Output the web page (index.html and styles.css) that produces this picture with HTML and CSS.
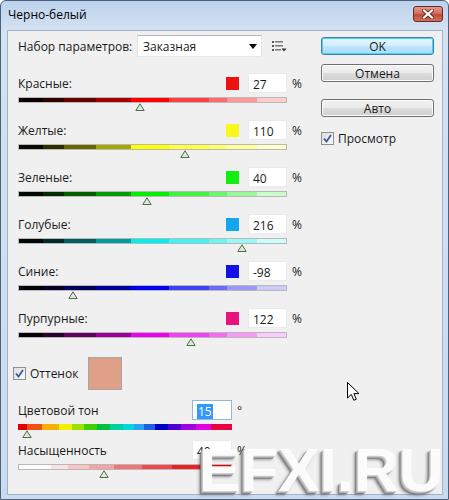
FILE: index.html
```html
<!DOCTYPE html>
<html lang="ru">
<head>
  <meta charset="UTF-8">
  <title>Черно-белый</title>
  <link rel="stylesheet" href="styles.css">
</head>
<body>

<div class="window">
  <div class="titlebar">
    <span class="title">Черно-белый</span>
    <div class="close">
      <svg width="12" height="10" viewBox="0 0 12 10">
        <path d="M2 1.5 L10 8.5 M10 1.5 L2 8.5" stroke="#6b2a22" stroke-width="4" stroke-linecap="square"/>
        <path d="M2 1.5 L10 8.5 M10 1.5 L2 8.5" stroke="#fff" stroke-width="2.2" stroke-linecap="square"/>
      </svg>
    </div>
  </div>

  <div class="content">
    <div class="main">

      <div class="preset">
        <span class="preset-label">Набор параметров:</span>
        <div class="select">
          <span>Заказная</span>
          <svg class="select-arrow" width="8" height="5" viewBox="0 0 8 5"><path d="M0 0 H8 L4 5 Z" fill="#000"/></svg>
        </div>
        <svg class="menu-icon" width="15" height="11" viewBox="0 0 15 11">
          <rect x="0" y="0" width="2" height="2" fill="#555"/>
          <rect x="3" y="0" width="8" height="1.5" fill="#777"/>
          <rect x="0" y="4" width="2" height="2" fill="#555"/>
          <rect x="3" y="4" width="8" height="1.5" fill="#777"/>
          <rect x="0" y="8" width="2" height="2" fill="#555"/>
          <rect x="3" y="8" width="6" height="1.5" fill="#777"/>
          <path d="M9.5 7.5 H14.5 L12 10.5 Z" fill="#333"/>
        </svg>
      </div>

      <div class="slider first red">
        <div class="head"><span class="name">Красные:</span><span class="swatch"></span><span class="num">27</span></div>
        <span class="unit">%</span>
        <div class="bar"></div>
        <div class="track"><svg class="thumb" style="left:45.4%" width="10" height="8" viewBox="0 0 10 8"><path d="M5 0.8 L9.2 7.5 H0.8 Z" fill="#dbe9d6" stroke="#4f6d4f"/></svg></div>
      </div>

      <div class="slider yellow">
        <div class="head"><span class="name">Желтые:</span><span class="swatch"></span><span class="num">110</span></div>
        <span class="unit">%</span>
        <div class="bar"></div>
        <div class="track"><svg class="thumb" style="left:62%" width="10" height="8" viewBox="0 0 10 8"><path d="M5 0.8 L9.2 7.5 H0.8 Z" fill="#dbe9d6" stroke="#4f6d4f"/></svg></div>
      </div>

      <div class="slider green">
        <div class="head"><span class="name">Зеленые:</span><span class="swatch"></span><span class="num">40</span></div>
        <span class="unit">%</span>
        <div class="bar"></div>
        <div class="track"><svg class="thumb" style="left:48%" width="10" height="8" viewBox="0 0 10 8"><path d="M5 0.8 L9.2 7.5 H0.8 Z" fill="#dbe9d6" stroke="#4f6d4f"/></svg></div>
      </div>

      <div class="slider cyan">
        <div class="head"><span class="name">Голубые:</span><span class="swatch"></span><span class="num">216</span></div>
        <span class="unit">%</span>
        <div class="bar"></div>
        <div class="track"><svg class="thumb" style="left:83.2%" width="10" height="8" viewBox="0 0 10 8"><path d="M5 0.8 L9.2 7.5 H0.8 Z" fill="#dbe9d6" stroke="#4f6d4f"/></svg></div>
      </div>

      <div class="slider blue">
        <div class="head"><span class="name">Синие:</span><span class="swatch"></span><span class="num">-98</span></div>
        <span class="unit">%</span>
        <div class="bar"></div>
        <div class="track"><svg class="thumb" style="left:20.4%" width="10" height="8" viewBox="0 0 10 8"><path d="M5 0.8 L9.2 7.5 H0.8 Z" fill="#dbe9d6" stroke="#4f6d4f"/></svg></div>
      </div>

      <div class="slider magenta">
        <div class="head"><span class="name">Пурпурные:</span><span class="swatch"></span><span class="num">122</span></div>
        <span class="unit">%</span>
        <div class="bar"></div>
        <div class="track"><svg class="thumb" style="left:64.4%" width="10" height="8" viewBox="0 0 10 8"><path d="M5 0.8 L9.2 7.5 H0.8 Z" fill="#dbe9d6" stroke="#4f6d4f"/></svg></div>
      </div>

      <div class="tint">
        <label class="check tint-check">
          <span class="box"><svg width="9" height="9" viewBox="0 0 9 9"><path d="M1 4.5 L3.5 7.5 L8 1" fill="none" stroke="#3c5a9a" stroke-width="1.8"/></svg></span>
          Оттенок
        </label>
        <span class="tint-swatch"></span>
      </div>

      <div class="slider short hue">
        <div class="head"><span class="name">Цветовой тон</span><span class="num focus"><span class="sel">15</span></span></div>
        <span class="unit">°</span>
        <div class="bar"></div>
        <div class="track"><svg class="thumb" style="left:4.2%" width="10" height="8" viewBox="0 0 10 8"><path d="M5 0.8 L9.2 7.5 H0.8 Z" fill="#dbe9d6" stroke="#4f6d4f"/></svg></div>
      </div>

      <div class="slider short sat">
        <div class="head"><span class="name">Насыщенность</span><span class="num">40</span></div>
        <span class="unit">%</span>
        <div class="bar"></div>
        <div class="track"><svg class="thumb" style="left:40%" width="10" height="8" viewBox="0 0 10 8"><path d="M5 0.8 L9.2 7.5 H0.8 Z" fill="#dbe9d6" stroke="#4f6d4f"/></svg></div>
      </div>

    </div>

    <div class="side">
      <div class="btn default">OK</div>
      <div class="btn">Отмена</div>
      <div class="btn auto">Авто</div>
      <label class="check preview">
        <span class="box"><svg width="9" height="9" viewBox="0 0 9 9"><path d="M1 4.5 L3.5 7.5 L8 1" fill="none" stroke="#3c5a9a" stroke-width="1.8"/></svg></span>
        Просмотр
      </label>
    </div>
  </div>

  <div class="watermark">EFXI.RU</div>

  <svg class="cursor" width="13" height="20" viewBox="0 0 13 20">
    <path d="M0.5 0.5 V16 L4.3 12.4 L6.8 18.3 L9.3 17.2 L6.9 11.6 H12 Z" fill="#fff" stroke="#000"/>
  </svg>
</div>

</body>
</html>
```

FILE: styles.css
```css
* {
  box-sizing: border-box;
}

body {
  margin: 0;
  font-family: "Segoe UI", "Open Sans", sans-serif;
  font-size: 12px;
  color: #1a1a1a;
}

.window {
  position: relative;
  width: 449px;
  height: 500px;
  display: flex;
  flex-direction: column;
  padding: 0 5px 4px 6px;
  border: 1px solid #4d6079;
  border-radius: 6px 6px 0 0;
  background: linear-gradient(#bcd2ec, #d4e2f2 29px, #c9dbef);
  overflow: hidden;
}

/* title bar */
.titlebar {
  height: 29px;
  display: flex;
  justify-content: space-between;
  align-items: flex-start;
}

.title {
  margin: 5px 0 0 1px;
  color: #000;
}

.close {
  width: 30px;
  height: 16px;
  margin-top: 5px;
  display: flex;
  align-items: center;
  justify-content: center;
  border: 1px solid #6e2b24;
  border-radius: 3px;
  background: linear-gradient(#e29a8c, #d06a58 50%, #c04a36 51%, #d0705a);
}

/* dialog body */
.content {
  flex: 1;
  display: flex;
  padding: 4px 8px 0 10px;
  border: 1px solid #9fb3cc;
  background: #f0f0f0;
}

.main {
  width: 289px;
  display: flex;
  flex-direction: column;
}

.preset {
  height: 22px;
  display: flex;
  align-items: center;
}

.preset-label {
  width: 119px;
}

.select {
  width: 125px;
  height: 22px;
  display: flex;
  align-items: center;
  justify-content: space-between;
  padding: 0 4px 0 5px;
  background: #fff;
  border: 1px solid #e3e6ea;
  border-top-color: #b5b9bf;
}

.select-arrow {
  margin-top: 1px;
}

.menu-icon {
  margin-left: 10px;
}

/* sliders */
.slider {
  display: grid;
  grid-template-columns: 269px 20px;
  margin-bottom: 9px;
}

.slider.first {
  margin-top: 16px;
}

.slider.short {
  grid-template-columns: 214px 20px;
}

.slider.hue {
  margin-bottom: 2px;
}

.head {
  grid-column: 1;
  grid-row: 1;
  height: 20px;
  display: flex;
  align-items: center;
}

.name {
  flex: 1;
}

.swatch {
  width: 13px;
  height: 13px;
  margin-right: 9px;
  background: var(--sw);
}

.num {
  width: 39px;
  height: 20px;
  padding: 2px 0 0 4px;
  background: #fff;
  border: 1px solid #e8eaee;
}

.short .num {
  width: 40px;
}

.num.focus {
  border-color: #8fb8e4;
}

.sel {
  display: inline-block;
  height: 15px;
  line-height: 15px;
  padding: 0 1px;
  background: #3399ff;
  color: #fff;
}

.unit {
  grid-column: 2;
  grid-row: 1;
  align-self: center;
  padding-left: 5px;
}

.bar {
  grid-column: 1;
  grid-row: 2;
  height: 6px;
  margin-top: 4px;
  border: 1px solid #b8b8b8;
  background:
    linear-gradient(to right,
      rgba(0,0,0,.96) 0 9%, rgba(0,0,0,.82) 9% 17%, rgba(0,0,0,.6) 17% 29%,
      rgba(0,0,0,.35) 29% 42%, rgba(0,0,0,0) 42% 56%,
      rgba(255,255,255,.25) 56% 71%, rgba(255,255,255,.42) 71% 78%,
      rgba(255,255,255,.6) 78% 89%, rgba(255,255,255,.8) 89% 100%),
    var(--c);
}

.track {
  grid-column: 1;
  grid-row: 3;
  height: 8px;
  position: relative;
}

.thumb {
  position: absolute;
  top: 0;
  transform: translateX(-50%);
}

.red { --c: #ff0000; --sw: #ee1111; }
.yellow { --c: #ffff00; --sw: #f8f81c; }
.green { --c: #00f000; --sw: #12ee12; }
.cyan { --c: #00f0f0; --sw: #12a6ee; }
.blue { --c: #0000f0; --sw: #1212e6; }
.magenta { --c: #f000f0; --sw: #e8127c; }

.hue .bar {
  border: none;
  background: linear-gradient(to right,
    #e00000 0 4%, #f05010 4% 11%, #f8b000 11% 19%, #f0f000 19% 25%,
    #a0e000 25% 31%, #40d000 31% 37%, #00c040 37% 43%, #00d0a0 43% 49%,
    #00d8e0 49% 54%, #30a0f0 54% 59%, #2060e0 59% 64%, #0000c0 64% 70%,
    #5000d0 70% 76%, #a000e0 76% 83%, #e000e0 83% 90%, #e80040 90% 100%);
}

.sat .bar {
  background: linear-gradient(to right,
    #fbfbfb 0 15%, #fbe2e2 15% 23%, #f8c4c4 23% 33%, #f4a4a4 33% 45%,
    #f07676 45% 58%, #ee4a4a 58% 72%, #ec2222 72% 85%, #e80000 85% 100%);
}

/* tint */
.tint {
  height: 33px;
  margin: 2px 0 10px -5px;
  display: flex;
  align-items: center;
}

.tint-check {
  width: 75px;
}

.tint-swatch {
  width: 34px;
  height: 33px;
  background: #e09f87;
  border: 1px solid #a6a6a6;
}

.check {
  display: flex;
  align-items: center;
  gap: 4px;
}

.box {
  width: 13px;
  height: 13px;
  display: flex;
  align-items: center;
  justify-content: center;
  border: 1px solid #8e8f8f;
  background: linear-gradient(135deg, #dcdcdc, #fbfbfb);
}

/* buttons */
.side {
  width: 113px;
  margin-left: 14px;
  padding-top: 2px;
  display: flex;
  flex-direction: column;
}

.btn {
  height: 18px;
  margin-bottom: 9px;
  display: flex;
  align-items: center;
  justify-content: center;
  border: 1px solid #707070;
  border-radius: 3px;
  box-shadow: inset 0 0 0 1px #fcfcfc;
  background: linear-gradient(#f2f2f2, #ebebeb 50%, #dddddd 50%, #cfcfcf);
}

.btn.default {
  border-color: #3c7fb1;
  box-shadow: inset 0 0 0 1px #48d2f6;
  background: linear-gradient(#e6f4fc, #d4eefb 50%, #bee6fd 50%, #a9dbf6);
}

.btn.auto {
  margin-top: 8px;
}

.preview {
  margin-top: 4px;
}

/* overlays */
.watermark {
  position: absolute;
  left: 198px;
  top: 444px;
  font-family: "Liberation Sans", Arial, sans-serif;
  font-weight: bold;
  font-size: 62px;
  line-height: 50px;
  color: rgba(255, 255, 255, 0.9);
  text-shadow: -1px 1px 0 #d0d0d0, -2px 2px 0 #b0b0b0, -3px 3px 1px #808080, -4px 4px 3px rgba(60, 60, 60, 0.5);
  pointer-events: none;
}

.cursor {
  position: absolute;
  left: 346px;
  top: 381px;
}
```
